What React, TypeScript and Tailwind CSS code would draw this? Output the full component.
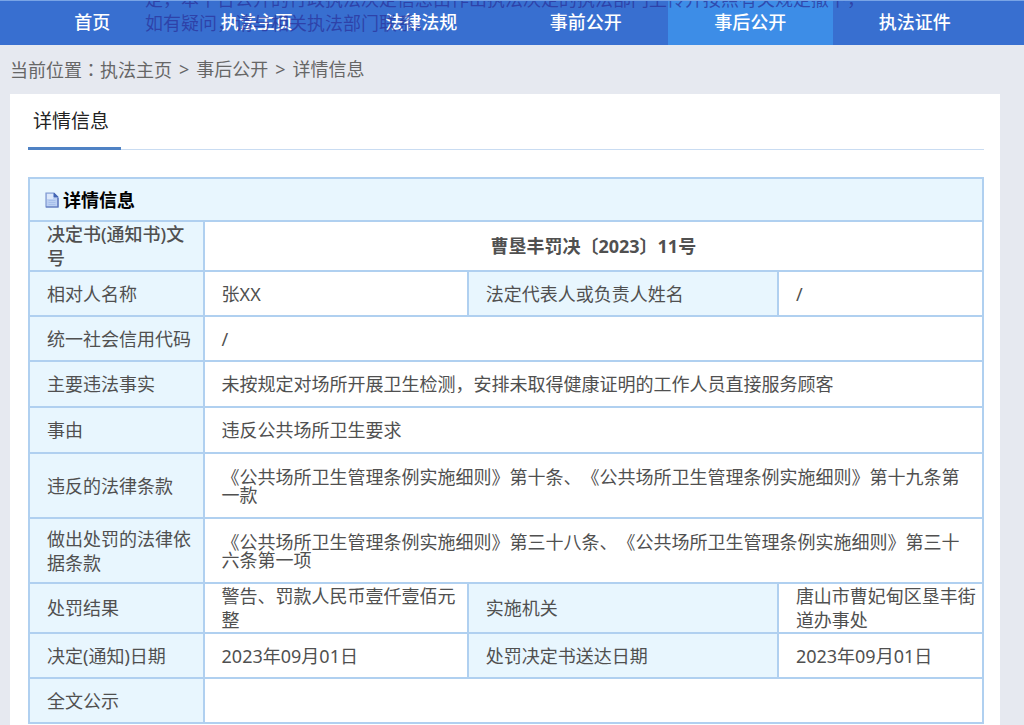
import React from "react";

const navItems = ["首页", "执法主页", "法律法规", "事前公开", "事后公开", "执法证件"];
const activeItem = "事后公开";

function DocumentIcon() {
  return (
    <svg viewBox="0 0 14 16" className="h-4 w-[14px] shrink-0" aria-hidden="true">
      <path d="M1 1h8l4 4v10H1z" fill="#bcd0f2" stroke="#7f97d0" strokeWidth="1.2" />
      <path d="M2 2h6v5H2z" fill="#dce8fb" />
      <path d="M9 1v4h4z" fill="#4566b4" stroke="#4566b4" strokeWidth="0.8" />
      <path d="M13 6v9H1" fill="none" stroke="#5b74bb" strokeWidth="1.2" />
      <path d="M3.5 8.5h7M3.5 10.5h7M3.5 12.5h7" stroke="#a5bdea" strokeWidth="0.9" />
    </svg>
  );
}

function Label({ children, strong = false }: { children: React.ReactNode; strong?: boolean }) {
  return (
    <th
      scope="row"
      className={`border-2 border-[#b0d0f0] bg-[#e8f6fe] py-0 pl-[17px] pr-1 text-left align-middle leading-6 ${
        strong ? "font-medium" : "font-normal"
      }`}
    >
      {children}
    </th>
  );
}

function Value({
  children,
  span = 1,
  dense = false,
}: {
  children?: React.ReactNode;
  span?: number;
  dense?: boolean;
}) {
  return (
    <td
      colSpan={span}
      className={`border-2 border-[#b0d0f0] py-0 pl-[17px] align-middle ${
        dense ? "pr-4 leading-[18px]" : "pr-1 leading-6"
      }`}
    >
      {children}
    </td>
  );
}

export default function App() {
  return (
    <div
      lang="zh-CN"
      className="min-h-screen bg-[#e6e9f0] text-[18px] text-[#505050] [font-family:'Noto_Sans','Noto_Sans_CJK_SC',sans-serif] [text-spacing-trim:space-all]"
    >
      <nav className="relative overflow-hidden border-t border-[#78a4e6] bg-[#386fd0] pl-[10px] pr-[27px]">
        <ul className="flex">
          {navItems.map((item) => (
            <li key={item} className="flex-1">
              <a
                href="#"
                aria-current={item === activeItem ? "page" : undefined}
                className={`block h-11 text-center font-medium leading-[42px] text-white ${
                  item === activeItem ? "bg-[#3d8de7]" : ""
                }`}
              >
                {item}
              </a>
            </li>
          ))}
        </ul>
        <p className="pointer-events-none absolute -top-[14px] left-[145px] whitespace-nowrap leading-6 text-[#2b349c]/75">
          定，本平台公开的行政执法决定信息由作出执法决定的执法部门上传并按照有关规定撤下，
          <br />
          如有疑问，请与相关执法部门联系。
        </p>
      </nav>

      <div className="flex h-[49px] items-center gap-[7px] pl-[10px] text-[#666]">
        <span>
          当前位置<span className="[font-family:'Noto_Sans_CJK_TC',sans-serif]" lang="zh-TW">：</span>
          <a href="#">执法主页</a>
        </span>
        <span>&gt;</span>
        <a href="#">事后公开</a>
        <span>&gt;</span>
        <span>详情信息</span>
      </div>

      <main className="ml-[10px] mr-6 bg-white pb-8 pl-[18px] pr-4">
        <div className="flex border-b border-[#c9dcf2]">
          <h1 className="-mb-px border-b-[3px] border-[#4f82c4] pb-3 pl-[5px] pr-[12px] pt-[13px] text-[19px] leading-7 text-[#222]">
            详情信息
          </h1>
        </div>

        <table className="mt-[27px] w-full table-fixed border-collapse">
          <colgroup>
            <col className="w-[18.3%]" />
            <col className="w-[27.7%]" />
            <col className="w-[32.5%]" />
            <col className="w-[21.5%]" />
          </colgroup>
          <thead>
            <tr className="h-[43px]">
              <th colSpan={4} className="border-2 border-[#b0d0f0] bg-[#e8f6fe] py-0 pl-[15px] text-left font-bold leading-6 text-black">
                <span className="flex items-center gap-1">
                  <DocumentIcon />
                  详情信息
                </span>
              </th>
            </tr>
          </thead>
          <tbody>
            <tr className="h-[50px]">
              <Label strong>决定书(通知书)文号</Label>
              <td colSpan={3} className="border-2 border-[#b0d0f0] py-0 text-center font-bold leading-6">
                曹垦丰罚决〔2023〕11号
              </td>
            </tr>
            <tr className="h-[45px]">
              <Label>相对人名称</Label>
              <Value>张XX</Value>
              <Label>法定代表人或负责人姓名</Label>
              <Value>/</Value>
            </tr>
            <tr className="h-[45px]">
              <Label>统一社会信用代码</Label>
              <Value span={3}>/</Value>
            </tr>
            <tr className="h-[46px]">
              <Label>主要违法事实</Label>
              <Value span={3}>未按规定对场所开展卫生检测，安排未取得健康证明的工作人员直接服务顾客</Value>
            </tr>
            <tr className="h-[46px]">
              <Label>事由</Label>
              <Value span={3}>违反公共场所卫生要求</Value>
            </tr>
            <tr className="h-[65px]">
              <Label>违反的法律条款</Label>
              <Value span={3} dense>
                《公共场所卫生管理条例实施细则》第十条、《公共场所卫生管理条例实施细则》第十九条第一款
              </Value>
            </tr>
            <tr className="h-[65px]">
              <Label>做出处罚的法律依据条款</Label>
              <Value span={3} dense>
                《公共场所卫生管理条例实施细则》第三十八条、《公共场所卫生管理条例实施细则》第三十六条第一项
              </Value>
            </tr>
            <tr className="h-[50px]">
              <Label>处罚结果</Label>
              <Value>警告、罚款人民币壹仟壹佰元整</Value>
              <Label>实施机关</Label>
              <Value>唐山市曹妃甸区垦丰街道办事处</Value>
            </tr>
            <tr className="h-[45px]">
              <Label>决定(通知)日期</Label>
              <Value>2023年09月01日</Value>
              <Label>处罚决定书送达日期</Label>
              <Value>2023年09月01日</Value>
            </tr>
            <tr className="h-[45px]">
              <Label>全文公示</Label>
              <Value span={3} />
            </tr>
          </tbody>
        </table>
      </main>
    </div>
  );
}
